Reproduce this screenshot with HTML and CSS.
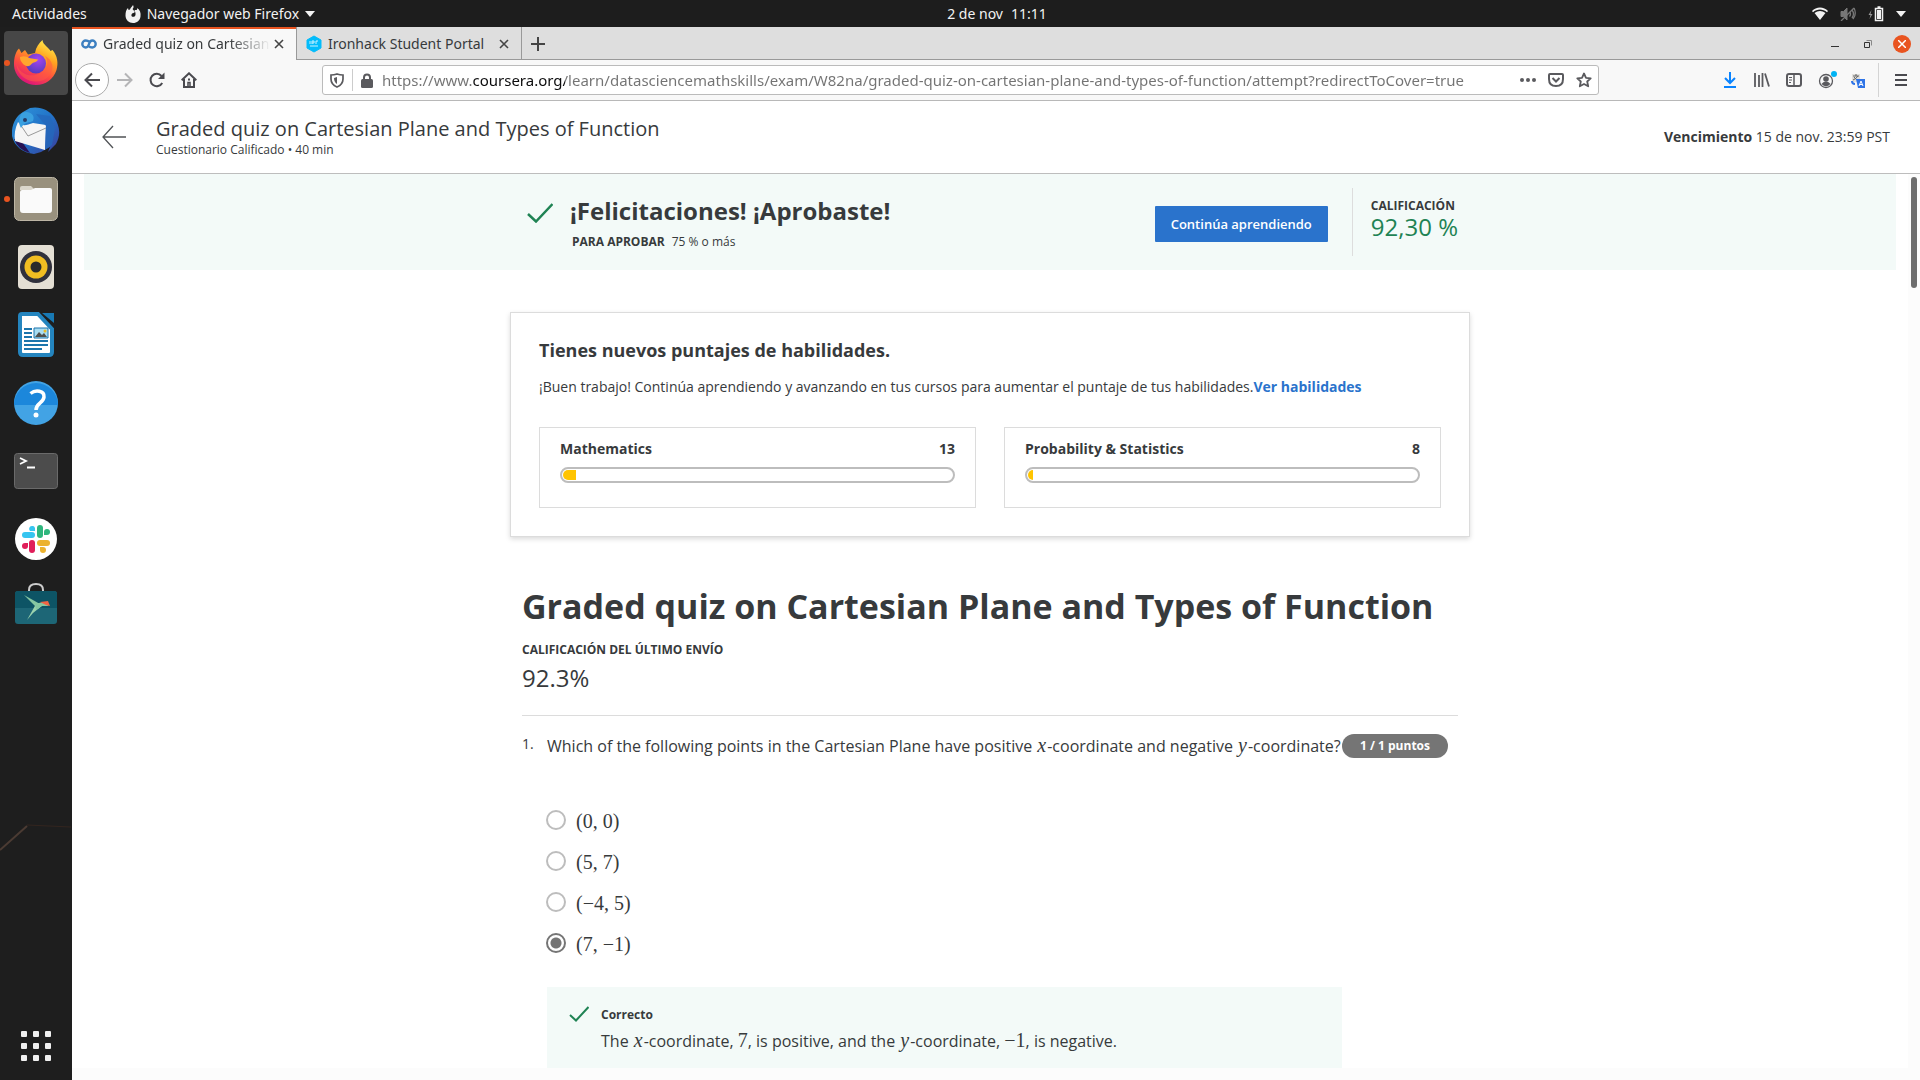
FILE: index.html
```html
<!DOCTYPE html>
<html lang="es">
<head>
<meta charset="utf-8">
<meta name="viewport" content="width=device-width, initial-scale=1">
<title>Graded quiz on Cartesian Plane and Types of Function</title>
<link rel="stylesheet" href="styles.css">
</head>
<body>
<div class="desktop">
  <header class="topbar">
    <div class="topbar-left">
      <button class="top-item" type="button">Actividades</button>
      <button class="top-item top-app" type="button">
        <svg width="16" height="18" viewBox="0 0 16 18"><path d="M8 0c1 2 .5 3-.5 4L10 7 8.500 8C7 8 6 9.500 6.500 11c1 1.500 3.500 1 4-1 .3-2-.5-3.500-1-5 3 .5 3-1 2.500-2 3 2 4 4.500 3.500 8.500C15 15.500 12 18 8 18s-7.500-3-7.500-7.500C.5 7 1 5 3 3l.5 2L5 4.500C5.500 2.500 7 2 8 0z" fill="#f2f2f2"/></svg>
        <span>Navegador web Firefox</span>
        <svg width="10" height="6" viewBox="0 0 10 6"><path d="M0 0h10L5 6z" fill="#f2f2f2"/></svg>
      </button>
    </div>
    <button class="top-item top-clock" type="button"><span>2 de nov</span><span>11:11</span></button>
    <div class="topbar-right">
      <svg width="16" height="14" viewBox="0 0 16 14"><path d="M0 4C4-.8 12-.8 16 4l-1 1.200C11 1.500 5 1.500 1 5.200zM2.500 6C6 3.200 10 3.200 13.500 6L8 13z" fill="#f2f2f2"/></svg>
      <svg width="16" height="14" viewBox="0 0 16 14" fill="none" stroke="#777"><path d="M1 4.500h2.500L7 1v12L3.500 9.500H1z" fill="#777"/><path d="M9.500 4.500q2 2.500 0 5M12 3q3 4 0 8M14 1q3 6-1 11M1 14 14 1" stroke-width="1.300"/></svg>
      <svg width="16" height="16" viewBox="0 0 16 16"><path d="M3.500 4 .5 9h2l-1 4 3-5h-2z" fill="#999"/><path d="M7.500 2.500h7v12h-7zM9.500 1h3" fill="none" stroke="#f2f2f2" stroke-width="1.500"/><path d="M9 4h4v9H9z" fill="#f2f2f2"/></svg>
      <svg width="10" height="6" viewBox="0 0 10 6"><path d="M0 0h10L5 6z" fill="#f2f2f2"/></svg>
    </div>
  </header>

  <nav class="dock" aria-label="Aplicaciones">
    <svg class="dock-streaks" width="72" height="120" viewBox="0 0 72 120"><path d="M0 72 27 48" stroke="#4b3b33" stroke-width="2"/><path d="M27 47 71 49" stroke="#33251f"/></svg>
    <button class="dock-item active running" type="button" aria-label="Firefox">
      <svg width="48" height="48" viewBox="0 0 48 48"><defs><linearGradient id="fx" x1=".8" y1="0" x2=".3" y2="1"><stop offset="0" stop-color="#fff44f"/><stop offset=".35" stop-color="#ffa420"/><stop offset=".65" stop-color="#ff4f3f"/><stop offset="1" stop-color="#d9107e"/></linearGradient><radialGradient id="fg" cx=".6" cy=".3" r=".8"><stop offset="0" stop-color="#a544f0"/><stop offset="1" stop-color="#4a3bb8"/></radialGradient></defs><path d="M7 9.500 9.500 14 13 11l3 4.500 7-1.500C24 8 27 4 30.500 1c.5 5 5 6 8 11l2-1c5 6 6 13 4 20-3 9-11 15-20.500 15S5 40 2.500 30C1 22 3 13 7 9.500z" fill="url(#fx)"/><circle cx="24" cy="24.500" r="10" fill="url(#fg)"/><path d="M8 18c4-1.500 7-.5 9 1l9 1.500c-1 3-5 2.500-7 5-2 3-6 1.500-8-.5-1-2-3-3-3-7z" fill="#ffa62e"/><path d="M4 22c2 14 16 18 26 11 7-5 6-12 3-16 8 4 10 13 4 20-9 10-28 6-32-8z" fill="#ff5a45" opacity=".55"/></svg>
    </button>
    <button class="dock-item" type="button" aria-label="Thunderbird">
      <svg width="48" height="48" viewBox="0 0 48 48"><defs><linearGradient id="tb" x1="0" y1="0" x2="1" y2="1"><stop offset="0" stop-color="#3197db"/><stop offset=".5" stop-color="#2273c8"/><stop offset="1" stop-color="#3c3b98"/></linearGradient></defs><path d="M11 5 18 1c10-2 19 2 24 9 6 9 7 18 2 27l-8 8 2-5-9 5-7 2C11 46 2 39 0 29-1 18 4 9 11 5z" fill="url(#tb)"/><path d="M2 32q4 11 16 14L8 32z" fill="#261253"/><path d="M6 15c4 5 9 3 15 1l13 2-1 25L3 34c-1-6 0-13 3-19z" fill="#f5f5f5"/><path d="m8 17 8 12 18-8" fill="none" stroke="#999"/><path d="M10 6c6-3 14 1 11 8-3 2-8 0-12 7-3-5-2-11 1-15z" fill="#3aa0e0"/><path d="m24 7 14 2 5 12-3 17-7 5 1-24z" fill="#2468bc" opacity=".8"/><circle cx="13" cy="13" r="2" fill="#253c6b"/></svg>
    </button>
    <button class="dock-item running" type="button" aria-label="Archivos">
      <svg width="48" height="48" viewBox="0 0 48 48"><rect x="2.500" y="2.500" width="43" height="43" rx="5" fill="#99917e" stroke="#bdb6a5"/><path d="M8 13q0-2 2-2h9l4 4H8z" fill="#dbd7cc"/><path d="M8 17q0-2 2-2h9l4-2h15q2 0 2 2v20q0 3-3 3H11q-3 0-3-3z" fill="#fafafa"/></svg>
    </button>
    <button class="dock-item" type="button" aria-label="Rhythmbox">
      <svg width="48" height="48" viewBox="0 0 48 48"><rect x="6" y="2" width="36" height="44" rx="4" fill="#e4dfd4"/><circle cx="24" cy="24" r="16" fill="#30303c"/><circle cx="24" cy="24" r="11.500" fill="#f1bd22"/><circle cx="24" cy="24" r="5.500" fill="#2b2b2b"/></svg>
    </button>
    <button class="dock-item" type="button" aria-label="LibreOffice Writer">
      <svg width="48" height="48" viewBox="0 0 48 48"><path d="M10 3h16l14 15v23q0 3-3 3H11q-3 0-3-3V5q0-2 2-2z" fill="#fff" stroke="#2485bf" stroke-width="4"/><path d="M30 2h12v10z" fill="#1879b4"/><path d="M12 18h8M12 22h8M12 26h8M12 30h24M12 34h24M12 38h18" stroke="#1c75ac" stroke-width="2"/><path d="M22 17h14v10H22z" fill="#a8ddf2" stroke="#1c75ac"/><path d="m23 26 4-5 3 3 2-2 3 4z" fill="#4e504d"/><circle cx="33" cy="20" r="1.500" fill="#e9ba28"/></svg>
    </button>
    <button class="dock-item" type="button" aria-label="Ayuda">
      <svg width="48" height="48" viewBox="0 0 48 48"><circle cx="24" cy="24" r="22" fill="#42a3e5"/><path d="M2 26a22 22 0 1 1 44 0z" fill="#1c87db"/><path d="M18.500 14.500c5-4 14-3 13.500 3.500-.5 6-8 6-8 13" fill="none" stroke="#fff" stroke-width="3.500"/><circle cx="24" cy="36" r="2.500" fill="#fff"/></svg>
    </button>
    <button class="dock-item" type="button" aria-label="Terminal">
      <svg width="48" height="48" viewBox="0 0 48 48"><rect x="2.500" y="6.500" width="43" height="35" rx="3" fill="#4c4c4c" stroke="#6a6a6a"/><path d="m8 11 6 3-6 3M15 20.500h8" fill="none" stroke="#fff" stroke-width="1.800"/></svg>
    </button>
    <button class="dock-item" type="button" aria-label="Slack">
      <svg width="48" height="48" viewBox="0 0 48 48" stroke-width="6" stroke-linecap="round"><circle cx="24" cy="24" r="21" fill="#fff"/><path d="M13 20h7" stroke="#36c5f0"/><path d="M28 13v7" stroke="#2eb67d"/><path d="M28 28h7" stroke="#ecb22e"/><path d="M20 28v7" stroke="#e01e5a"/><path d="M20 16h-2a3 3 0 1 1 5-3v3z" fill="#36c5f0"/><path d="M32 20v-3a3 3 0 1 1 3 3z" fill="#2eb67d"/><path d="M28 32h3a3 3 0 1 1-3 3z" fill="#ecb22e"/><path d="M16 28v3a3 3 0 1 1-3-3z" fill="#e01e5a"/></svg>
    </button>
    <button class="dock-item" type="button" aria-label="Software">
      <svg width="48" height="48" viewBox="0 0 48 48"><path d="M17 9V7q0-6 7-6t7 6v2" fill="none" stroke="#ccc" stroke-width="2"/><rect x="3" y="8" width="42" height="33" rx="3" fill="#1d6676"/><path d="M3 25V11q0-3 3-3h36q3 0 3 3v14z" fill="#0d5465"/><path d="m12 12 16 9-2 5z" fill="#85c7a2"/><path d="m28 20 3 2-10 8-6 7 9-16z" fill="#9bd3ae"/><path d="m23 21 8-2 6 4h-7l-6 4z" fill="#85c7a2"/><path d="m28 19 8-1 2 5-4-1z" fill="#f26444"/></svg>
    </button>
    <button class="dock-item apps" type="button" aria-label="Mostrar aplicaciones">
      <svg width="30" height="30" viewBox="0 0 30 30" fill="#f0f0f0"><rect width="6" height="6" rx="1"/><rect x="12" width="6" height="6" rx="1"/><rect x="24" width="6" height="6" rx="1"/><rect y="12" width="6" height="6" rx="1"/><rect x="12" y="12" width="6" height="6" rx="1"/><rect x="24" y="12" width="6" height="6" rx="1"/><rect y="24" width="6" height="6" rx="1"/><rect x="12" y="24" width="6" height="6" rx="1"/><rect x="24" y="24" width="6" height="6" rx="1"/></svg>
    </button>
  </nav>

  <section class="browser">
    <div class="tabstrip">
      <div class="tab selected">
        <svg width="16" height="10" viewBox="0 0 16 10" fill="none" stroke="#3c7fc0" stroke-width="2.400"><path d="M8.500 3Q6.800 1.500 4.800 1.500a3.500 3.500 0 0 0 0 7Q7 8.500 8 5t3.200-3.500a3.500 3.500 0 0 1 0 7Q9.200 8.500 7.500 7"/></svg>
        <span class="tab-title fade">Graded quiz on Cartesian</span>
        <button class="icon-btn" type="button" aria-label="Cerrar pestaña"><svg width="10" height="10" viewBox="0 0 10 10"><path d="m1 1 8 8M9 1 1 9" stroke="#444" stroke-width="1.600"/></svg></button>
      </div>
      <div class="tab">
        <svg width="16" height="18" viewBox="0 0 16 18"><path d="m8 1 7 4v8l-7 4-7-4V5z" fill="#03bcfb" stroke="#03bcfb"/><path d="M4 6v3M6 9V6h2v2H6m4 1V6h2M4 11h8" stroke="#c9f1ff" fill="none"/></svg>
        <span class="tab-title">Ironhack Student Portal</span>
        <button class="icon-btn" type="button" aria-label="Cerrar pestaña"><svg width="10" height="10" viewBox="0 0 10 10"><path d="m1 1 8 8M9 1 1 9" stroke="#444" stroke-width="1.600"/></svg></button>
      </div>
      <button class="icon-btn new-tab" type="button" aria-label="Nueva pestaña"><svg width="14" height="14" viewBox="0 0 14 14"><path d="M7 0v14M0 7h14" stroke="#444" stroke-width="2"/></svg></button>
      <div class="window-controls">
        <button class="icon-btn" type="button" aria-label="Minimizar"><svg width="8" height="10" viewBox="0 0 8 10"><path d="M0 7.500h8" stroke="#333"/></svg></button>
        <button class="icon-btn" type="button" aria-label="Restaurar"><svg width="8" height="8" viewBox="0 0 8 8" fill="none"><path d="M.5 2.500h5v5h-5z" stroke="#333"/><path d="M2.500.5h5v5" stroke="#888"/></svg></button>
        <button class="icon-btn close" type="button" aria-label="Cerrar"><svg width="8" height="8" viewBox="0 0 8 8"><path d="m0 0 8 8M8 0 0 8" stroke="#fff" stroke-width="1.500"/></svg></button>
      </div>
    </div>

    <div class="toolbar">
      <div class="nav-buttons">
        <button class="icon-btn back" type="button" aria-label="Atrás"><svg width="16" height="16" viewBox="0 0 16 16" fill="none" stroke="#4a4a4f" stroke-width="2"><path d="M16 8H1.500M8 1.500 1.500 8 8 14.500"/></svg></button>
        <button class="icon-btn" type="button" aria-label="Adelante"><svg width="16" height="16" viewBox="0 0 16 16" fill="none" stroke="#b5b5b7" stroke-width="2"><path d="M0 8h14.500M8 1.500 14.500 8 8 14.500"/></svg></button>
        <button class="icon-btn" type="button" aria-label="Recargar"><svg width="16" height="16" viewBox="0 0 16 16"><path d="M13.200 11A6.200 6.200 0 1 1 12.500 4" fill="none" stroke="#4a4a4f" stroke-width="2"/><path d="M15.500.5v6.500H9z" fill="#4a4a4f"/></svg></button>
        <button class="icon-btn" type="button" aria-label="Inicio"><svg width="16" height="16" viewBox="0 0 16 16" fill="none" stroke="#4a4a4f" stroke-width="2"><path d="m.7 8.300 7.300-7 7.300 7M3 7v8h10V7"/><path d="M7 15v-4.500h2V15" stroke-width="1.500"/><path d="M8 6.500v2"/></svg></button>
      </div>
      <div class="urlbar">
        <svg width="14" height="15" viewBox="0 0 14 15"><path d="M7 1q3 1 6 1v4q0 5.500-6 8Q1 11.500 1 6V2q3 0 6-1z" fill="none" stroke="#5a5a5e" stroke-width="1.700"/><path d="M7 4v7q-3-2-3-6z" fill="#5a5a5e"/></svg>
        <span class="url-sep"></span>
        <svg width="12" height="15" viewBox="0 0 12 15"><rect y="6" width="12" height="9" rx="1.500" fill="#5a5a5e"/><path d="M3 7V4.500a3 3 0 0 1 6 0V7" fill="none" stroke="#5a5a5e" stroke-width="2"/></svg>
        <input class="url" type="text" aria-label="Dirección" value="https://www.coursera.org/learn/datasciencemathskills/exam/W82na/graded-quiz-on-cartesian-plane-and-types-of-function/attempt?redirectToCover=true">
        <button class="icon-btn" type="button" aria-label="Acciones de página"><svg width="16" height="4" viewBox="0 0 16 4" fill="#5a5a5e"><circle cx="2" cy="2" r="2"/><circle cx="8" cy="2" r="2"/><circle cx="14" cy="2" r="2"/></svg></button>
        <button class="icon-btn" type="button" aria-label="Pocket"><svg width="16" height="14" viewBox="0 0 16 14" fill="none" stroke="#5a5a5e" stroke-width="2"><path d="M2 1h12q1 0 1 1v4q0 7-7 7T1 6V2q0-1 1-1z"/><path d="m4.500 5 3.500 3.500L11.500 5"/></svg></button>
        <button class="icon-btn" type="button" aria-label="Añadir marcador"><svg width="16" height="16" viewBox="0 0 16 16"><path d="m8 1.500 2 4.300 4.700.5-3.500 3.200 1 4.800L8 12l-4.200 2.300 1-4.800L1.300 6.300 6 5.800z" fill="none" stroke="#5a5a5e" stroke-width="1.800" stroke-linejoin="round"/></svg></button>
      </div>
      <div class="tools">
        <button class="icon-btn" type="button" aria-label="Descargas"><svg width="16" height="16" viewBox="0 0 16 16" fill="none" stroke="#0a84ff" stroke-width="2"><path d="M8 0v11M3 6l5 5 5-5M2 15h12"/></svg></button>
        <button class="icon-btn" type="button" aria-label="Biblioteca"><svg width="16" height="14" viewBox="0 0 16 14" stroke="#5a5a5e" stroke-width="1.800"><path d="M1 0v14M5 2v12M8.500 0v14M11 .5l4 13"/></svg></button>
        <button class="icon-btn" type="button" aria-label="Barra lateral"><svg width="16" height="14" viewBox="0 0 16 14" fill="none" stroke="#5a5a5e"><rect x="1" y="1" width="14" height="12" rx="2" stroke-width="2"/><path d="M8 1v12" stroke-width="1.500"/><path d="M3 4.500h3M3 7h3M3 9.500h2"/></svg></button>
        <button class="icon-btn" type="button" aria-label="Cuenta"><svg width="20" height="20" viewBox="0 0 20 20"><circle cx="8" cy="11" r="6.500" fill="none" stroke="#5a5a5e" stroke-width="1.300"/><circle cx="8" cy="9" r="2.800" fill="#5a5a5e"/><path d="M3.500 14q1.500-2.500 4.500-2.500t4.500 2.500Q8 18.500 3.500 14z" fill="#5a5a5e"/><circle cx="16" cy="4" r="3" fill="#00b3f4"/></svg></button>
        <button class="icon-btn" type="button" aria-label="Traducir"><svg width="16" height="16" viewBox="0 0 16 16"><path d="M2 2h8v8H2z" fill="#e2e0dc"/><path d="M3 4h6M6 2v2m2 0Q6 7 3 8m1-3q2 3 4 3" stroke="#666" fill="none"/><path d="M6 7h9v9H8z" fill="#2f74e6"/><path d="m9 14 2-5 2 5m-3.300-1.500h2.600" stroke="#fff" fill="none"/><path d="M2 9q0 3 3 3" stroke="#2f74e6" stroke-width="2" fill="none"/></svg></button>
        <span class="tool-sep"></span>
        <button class="icon-btn" type="button" aria-label="Menú"><svg width="12" height="12" viewBox="0 0 12 12"><path d="M0 1h12M0 6h12M0 11h12" stroke="#4a4a4f" stroke-width="2"/></svg></button>
      </div>
    </div>

    <header class="course-header">
      <a class="course-back" href="#" aria-label="Volver"><svg width="24" height="24" viewBox="0 0 24 24" fill="none" stroke="#505356"><path d="M1 12h23M11 1 1 12l10 11" stroke-width="1.300"/></svg></a>
      <div class="course-name">
        <div class="course-title">Graded quiz on Cartesian Plane and Types of Function</div>
        <div class="small">Cuestionario Calificado • 40 min</div>
      </div>
      <div class="due"><b>Vencimiento</b> 15 de nov. 23:59 PST</div>
    </header>

    <div class="viewport">
      <main class="page">
        <section class="banner">
          <div class="banner-inner">
            <svg class="banner-check" width="26" height="20" viewBox="0 0 26 20"><path d="m1 11 8 7.500L25.500 1" fill="none" stroke="#1f8354" stroke-width="2.500"/></svg>
            <div class="banner-text">
              <h2>¡Felicitaciones! ¡Aprobaste!</h2>
              <p class="small"><b>PARA APROBAR</b><span>75 % o más</span></p>
            </div>
            <button class="primary" type="button">Continúa aprendiendo</button>
            <div class="grade">
              <div class="small strong">CALIFICACIÓN</div>
              <div class="grade-value">92,30 %</div>
            </div>
          </div>
        </section>

        <section class="skills">
          <h3>Tienes nuevos puntajes de habilidades.</h3>
          <p>¡Buen trabajo! Continúa aprendiendo y avanzando en tus cursos para aumentar el puntaje de tus habilidades.<a href="#">Ver habilidades</a></p>
          <div class="skill-list">
            <div class="skill">
              <div class="skill-head"><span>Mathematics</span><span>13</span></div>
              <div class="bar" role="progressbar" aria-label="Mathematics" aria-valuenow="13" aria-valuemax="400"><div class="fill" style="width:13px"></div></div>
            </div>
            <div class="skill">
              <div class="skill-head"><span>Probability &amp; Statistics</span><span>8</span></div>
              <div class="bar" role="progressbar" aria-label="Probability &amp; Statistics" aria-valuenow="8" aria-valuemax="400"><div class="fill" style="width:5px"></div></div>
            </div>
          </div>
        </section>

        <section class="quiz">
          <h1>Graded quiz on Cartesian Plane and Types of Function</h1>
          <div class="small strong">CALIFICACIÓN DEL ÚLTIMO ENVÍO</div>
          <div class="last-grade">92.3%</div>
          <div class="question">
            <span class="number">1.</span>
            <div class="question-body">
              <p class="prompt" id="q1">Which of the following points in the Cartesian Plane have positive <i class="math">x</i>-coordinate and negative <i class="math">y</i>-coordinate?</p>
              <div class="options" role="radiogroup" aria-labelledby="q1">
                <label class="option"><input type="radio" name="q1"><span class="math">(0, 0)</span></label>
                <label class="option"><input type="radio" name="q1"><span class="math">(5, 7)</span></label>
                <label class="option"><input type="radio" name="q1"><span class="math">(−4, 5)</span></label>
                <label class="option"><input type="radio" name="q1" checked><span class="math">(7, −1)</span></label>
              </div>
              <div class="feedback">
                <svg width="20" height="16" viewBox="0 0 20 16"><path d="m1 9 6 5.500L19.500 1" fill="none" stroke="#1f8354" stroke-width="2"/></svg>
                <div>
                  <div class="small strong">Correcto</div>
                  <p>The <i class="math">x</i>-coordinate, <span class="math">7</span>, is positive, and the <i class="math">y</i>-coordinate, <span class="math">−1</span>, is negative.</p>
                </div>
              </div>
            </div>
            <span class="points">1 / 1 puntos</span>
          </div>
        </section>
      </main>
      <div class="track"><div class="thumb"></div></div>
    </div>
  </section>
</div>
</body>
</html>
```
FILE: styles.css
```css
* { box-sizing: border-box; }

body {
  margin: 0;
  color: #373a3c;
  font: 14px/20px "Open Sans", "Noto Sans", sans-serif;
}

h1, h2, h3, p { margin: 0; }
svg { display: block; flex: none; }
button { border: 0; padding: 0; background: none; color: inherit; font: inherit; }

.desktop {
  display: grid;
  grid-template: 27px minmax(0, 1fr) / 72px minmax(0, 1fr);
  height: 100vh;
  overflow: hidden;
  background: #fff;
}

/* System bar */
.topbar {
  grid-column: 1 / -1;
  display: grid;
  grid-template-columns: 1fr auto 1fr;
  align-items: center;
  padding: 0 14px 0 12px;
  background: #1d1d1d;
  color: #f2f2f2;
  font-family: "Noto Sans", sans-serif;
}
.topbar-left, .topbar-right, .top-app, .top-clock { display: flex; align-items: center; }
.topbar-left { gap: 38px; }
.top-app { gap: 6px; }
.top-clock { gap: 8px; margin-left: 76px; }
.topbar-right { justify-content: flex-end; gap: 12px; }

/* Dock */
.dock {
  position: relative;
  display: flex;
  flex-direction: column;
  align-items: center;
  gap: 4px;
  padding: 4px 0 2px;
  background: #1e1e1e;
}
.dock-streaks { position: absolute; left: 0; top: 751px; }
.dock-item {
  position: relative;
  display: grid;
  place-items: center;
  width: 64px;
  height: 64px;
  border-radius: 4px;
}
.dock-item.active { background: #474747; }
.dock-item.running::before {
  content: "";
  position: absolute;
  left: 0;
  width: 6px;
  height: 6px;
  border-radius: 3px;
  background: #e95420;
}
.apps { margin-top: auto; }

/* Browser chrome */
.browser {
  display: flex;
  flex-direction: column;
  min-height: 0;
}
.icon-btn { display: grid; place-items: center; flex: none; min-width: 16px; }

.tabstrip {
  display: flex;
  align-items: stretch;
  height: 33px;
  background: #dedede;
  box-shadow: inset 0 -1px #999;
  font-family: "Noto Sans", sans-serif;
}
.tab {
  display: flex;
  align-items: center;
  gap: 6px;
  width: 225px;
  padding: 0 9px;
  border-right: 1px solid #999;
}
.tab .icon-btn { margin-left: -6px; }
.tab.selected { background: #f8f8f8; box-shadow: inset 0 2px #e95420; }
.tab-title { flex: 1; white-space: nowrap; }
.tab-title.fade { mask-image: linear-gradient(to right, #000 75%, transparent); }
.new-tab { width: 32px; }
.window-controls { display: flex; align-items: center; gap: 17px; margin-left: auto; padding-right: 9px; }
.close { width: 18px; height: 18px; border-radius: 9px; background: #e95420; }

.toolbar {
  display: flex;
  align-items: center;
  height: 41px;
  padding: 0 11px 0 3px;
  background: #f8f8f8;
  border-bottom: 1px solid #b8b8b8;
}
.nav-buttons { display: flex; align-items: center; gap: 16px; width: 247px; }
.back { width: 34px; height: 34px; margin-right: -8px; border: 1px solid #aaa; border-radius: 17px; background: #fff; }
.urlbar {
  display: flex;
  align-items: center;
  gap: 8px;
  flex: 0 1 1277px;
  min-width: 0;
  height: 30px;
  padding: 0 4px 0 7px;
  border: 1px solid #bbb;
  border-radius: 3px;
  background: #fff;
}
.urlbar .icon-btn { min-width: 20px; }
.url-sep { width: 1px; height: 22px; background: #ccc; }
.url {
  flex: 1;
  min-width: 0;
  border: 0;
  padding: 0 0 0 1px;
  outline: 0;
  color: #737373;
  font: 15px/20px "Noto Sans", sans-serif;
  /* host name darker than the rest of the address */
  background: linear-gradient(to right, #737373 91px, #0c0c0d 91px, #0c0c0d 184px, #737373 184px) text;
  -webkit-text-fill-color: transparent;
}
.tools { display: flex; align-items: center; gap: 16px; margin-left: auto; }
.tools .icon-btn { width: 16px; height: 34px; }
.tool-sep { width: 1px; height: 34px; background: #d4d4d4; margin-right: -2px; margin-left: -4px; }

/* Course header */
.course-header {
  display: flex;
  align-items: center;
  height: 73px;
  padding: 0 30px;
  border-bottom: 1px solid #bdbdbd;
}
.course-name { margin-left: 30px; padding-top: 2px; flex: 1; }
.course-title { font-size: 20px; line-height: 24px; }
.small { font-size: 12px; line-height: 18px; }
.strong { font-weight: 700; }

/* Scrolling page */
.viewport {
  position: relative;
  flex: 1;
  min-height: 0;
  padding: 0 12px 12px 0;
  background: #fcfcfc;
}
.page { height: 100%; overflow: hidden; background: #fff; }
.track { position: absolute; top: 3px; right: 3px; bottom: 12px; width: 6px; }
.thumb { height: 111px; border-radius: 3px; background: #6e6e6e; }

.banner { margin: 0 12px; background: #f3faf8; }
.banner-inner {
  display: flex;
  align-items: center;
  max-width: 936px;
  height: 96px;
  margin: 0 auto;
  padding-left: 5px;
}
.banner-check { margin-bottom: 18px; }
.banner-text { flex: 1; margin-left: 17px; }
.banner-text h2 { font-size: 24px; line-height: 34px; }
.banner-text p { display: flex; gap: 7px; padding: 5px 2px 0; }
.primary {
  height: 36px;
  padding: 0 16px;
  margin-right: 24px;
  margin-top: 4px;
  border-radius: 1px;
  background: #2a73cc;
  color: #fff;
  font-size: 13px;
  font-weight: 600;
}
.grade { height: 68px; padding: 9px 0 0 18px; border-left: 1px solid #ddd; }
.grade-value { color: #1f8354; font-size: 24px; line-height: 24px; white-space: nowrap; }

.skills {
  max-width: 960px;
  margin: 42px auto 0;
  padding: 25px 28px 28px;
  border: 1px solid #dcdcdc;
  box-shadow: 0 2px 5px rgba(0, 0, 0, .15);
}
.skills h3 { font-size: 18px; line-height: 24px; }
.skills p { margin-top: 15px; }
.skills a { color: #2a73cc; font-weight: 700; text-decoration: none; }
.skill-list { display: grid; grid-template-columns: 1fr 1fr; gap: 28px; margin-top: 30px; }
.skill { padding: 11px 20px 24px; border: 1px solid #dcdcdc; }
.skill-head { display: flex; justify-content: space-between; font-weight: 700; }
.bar { height: 16px; margin-top: 8px; padding: 1px; border: 2px solid #bdbdbd; border-radius: 8px; }
.fill { height: 10px; border-radius: 5px 0 0 5px; background: #ffc400; }

.quiz { max-width: 936px; margin: 43px auto 0; }
.quiz h1 { font-size: 34px; line-height: 52px; margin-bottom: 9px; }
.last-grade { padding: 2px 0 20px; border-bottom: 1px solid #dcdcdc; font-size: 24px; line-height: 34px; }
.question { display: flex; align-items: flex-start; margin-top: 18px; }
.number { width: 25px; flex: none; }
.question-body { width: 795px; flex: none; }
.prompt, .feedback p { font-size: 16px; line-height: 24px; white-space: nowrap; }
.math { font-family: "Liberation Serif", serif; font-size: 20px; line-height: 20px; }
i.math { padding: 0 1px; }
.points {
  flex: none;
  width: 106px;
  border-radius: 12px;
  background: #757575;
  color: #fff;
  font-size: 12px;
  font-weight: 700;
  line-height: 24px;
  text-align: center;
}
.options { display: grid; gap: 21px; margin-top: 52px; }
.option { display: flex; align-items: center; gap: 10px; height: 20px; }
.option .math { padding-top: 2px; }
.option input {
  appearance: none;
  width: 20px;
  height: 20px;
  margin: 0 0 0 -1px;
  border: 2px solid #bdbdbd;
  border-radius: 10px;
  background: #fff;
}
.option input:checked {
  border-color: #757575;
  background: radial-gradient(circle, #757575 5px, #fff 6px);
}
.feedback { display: flex; gap: 12px; margin-top: 34px; padding: 19px 22px 24px; background: #f3faf8; }
.feedback p { margin-top: 5px; }
```
